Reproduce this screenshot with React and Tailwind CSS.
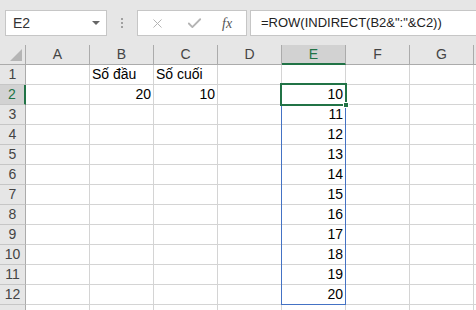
import { X, Check } from 'lucide-react';

const cols = ['A', 'B', 'C', 'D', 'E', 'F', 'G'];

// dữ liệu ô: [cột] -> { text, align }
const cellData = (row, col) => {
  if (row === 1 && col === 'B') return { text: 'Số đầu', align: 'left' };
  if (row === 1 && col === 'C') return { text: 'Số cuối', align: 'left' };
  if (row === 2 && col === 'B') return { text: '20', align: 'right' };
  if (row === 2 && col === 'C') return { text: '10', align: 'right' };
  if (col === 'E' && row >= 2 && row <= 12) return { text: String(row + 8), align: 'right' };
  return null;
};

export default function App() {
  const rows = Array.from({ length: 13 }, (_, i) => i + 1);

  return (
    <div
      className="relative w-[476px] h-[310px] overflow-hidden bg-[#e6e6e6] text-[14px] text-black"
      style={{ fontFamily: '"Liberation Sans", Arial, sans-serif' }}
    >
      {/* Thanh công thức */}
      <div className="h-[45px] flex items-start pt-[10px] pl-[5px]">
        <div className="w-[102px] h-[26px] bg-white border border-[#c6c6c6] flex items-center justify-between pl-[7px] pr-[6px]">
          <span className="text-[#333] text-[14px]">E2</span>
          <span className="w-0 h-0 border-l-[4px] border-r-[4px] border-t-[4px] border-l-transparent border-r-transparent border-t-[#666]" />
        </div>
        <div className="w-[30px] h-[26px] flex flex-col items-center justify-center gap-[2px]">
          <span className="w-[2px] h-[2px] bg-[#a0a0a0]" />
          <span className="w-[2px] h-[2px] bg-[#a0a0a0]" />
          <span className="w-[2px] h-[2px] bg-[#a0a0a0]" />
        </div>
        <div className="w-[110px] h-[26px] bg-white border border-[#c6c6c6] flex items-center pl-[12px]">
          <X size={15} strokeWidth={1.6} className="text-[#b4b4b4]" />
          <Check size={17} strokeWidth={2.6} className="text-[#b4b4b4] ml-[21px]" />
          <span
            className="ml-[19px] italic text-[#555] text-[14px]"
            style={{ fontFamily: '"Liberation Serif", serif' }}
          >
            fx
          </span>
        </div>
        <div className="ml-[3px] flex-1 h-[26px] bg-white border border-r-0 border-[#c6c6c6] flex items-center pl-[10px]">
          <span className="text-[#222] text-[13px]">=ROW(INDIRECT(B2&amp;":"&amp;C2))</span>
        </div>
      </div>

      {/* Lưới bảng tính */}
      <div className="grid grid-cols-[26px_repeat(7,64px)_1fr] auto-rows-[20px]">
        {/* Góc trên trái */}
        <div className="relative bg-[#e6e6e6] border-r border-b border-[#ababab]">
          <svg className="absolute right-[3px] bottom-[3px]" width="12" height="12" viewBox="0 0 12 12">
            <polygon points="12,0 12,12 0,12" fill="#b5b5b5" />
          </svg>
        </div>
        {cols.map((c) => (
          <div
            key={c}
            className={
              c === 'E'
                ? 'bg-[#d2d2d2] border-r border-[#ababab] border-b-2 border-b-[#217346] flex items-center justify-center text-[#217346]'
                : 'bg-[#e6e6e6] border-r border-b border-[#ababab] flex items-center justify-center text-[#444]'
            }
          >
            {c}
          </div>
        ))}
        <div className="bg-[#e6e6e6] border-b border-[#ababab]" />

        {rows.map((r) => (
          <div key={r} className="contents">
            <div
              className={
                r === 2
                  ? 'bg-[#d2d2d2] border-r-2 border-r-[#217346] border-b border-b-[#c6c6c6] flex items-center justify-center text-[#217346]'
                  : 'bg-[#e6e6e6] border-r border-r-[#ababab] border-b border-b-[#c6c6c6] flex items-center justify-center text-[#444]'
              }
            >
              {r <= 12 ? r : ''}
            </div>
            {cols.map((c) => {
              const d = cellData(r, c);
              return (
                <div
                  key={c}
                  className={`bg-white border-r border-b border-[#d4d4d4] flex items-center px-[2px] whitespace-nowrap ${
                    d && d.align === 'right' ? 'justify-end' : 'justify-start'
                  }`}
                >
                  {d ? d.text : ''}
                </div>
              );
            })}
            <div className="bg-white border-b border-[#d4d4d4]" />
          </div>
        ))}
      </div>

      {/* Vùng tràn (spill) màu xanh */}
      <div className="absolute left-[281px] top-[84px] w-[65px] h-[221px] border border-[#4472c4] pointer-events-none" />
      {/* Ô đang chọn E2 */}
      <div className="absolute left-[280px] top-[83px] w-[67px] h-[23px] border-2 border-[#217346] pointer-events-none" />
      <div className="absolute left-[343px] top-[102px] w-[6px] h-[6px] bg-[#217346] border border-white" />
    </div>
  );
}
